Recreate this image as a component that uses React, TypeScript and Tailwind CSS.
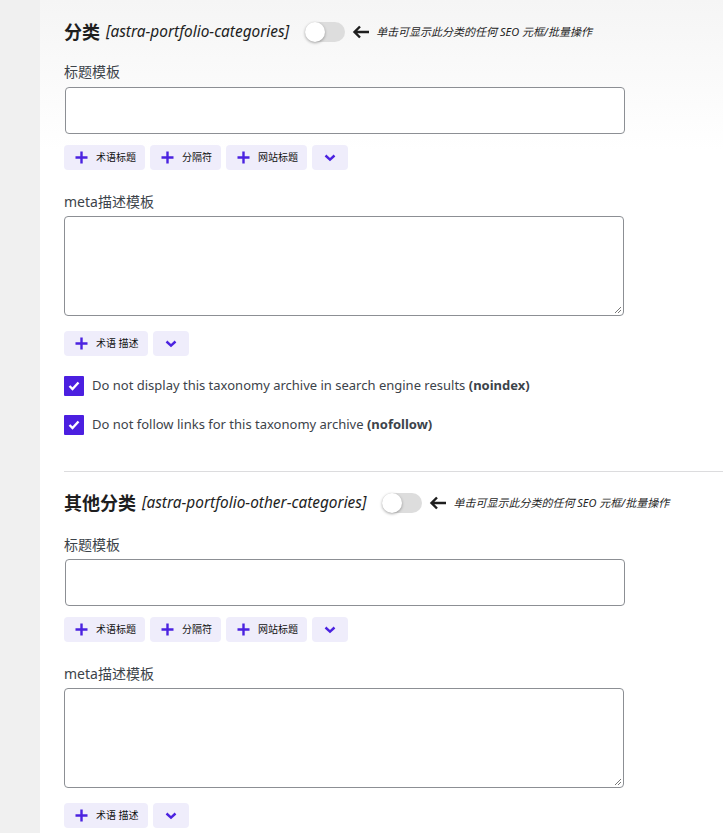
const cjk = '"Noto Sans", "Noto Sans CJK SC", sans-serif';

function Toggle() {
  return (
    <div className="relative w-[40px] h-[20px] rounded-full bg-[#dddddd]">
      <div className="absolute left-0 top-0 w-[20px] h-[20px] rounded-full bg-white shadow-[0_1px_3px_rgba(0,0,0,0.35)]" />
    </div>
  );
}

function Plus() {
  return (
    <svg width="13" height="13" viewBox="0 0 13 13" className="shrink-0">
      <path d="M6.5 0.5v12M0.5 6.5h12" stroke="#4b22e0" strokeWidth="2.4" />
    </svg>
  );
}

function Chevron() {
  return (
    <svg width="12" height="8" viewBox="0 0 12 8">
      <path d="M1.5 1.5l4.5 4.2 4.5-4.2" fill="none" stroke="#4b22e0" strokeWidth="2.4" />
    </svg>
  );
}

function TagButton({ label, w }: { label: string; w: string }) {
  return (
    <button
      className={`flex items-center gap-[8px] h-[25px] pl-[11px] rounded-[4px] bg-[#efedfb] text-[10px] text-[#111111] ${w}`}
    >
      <Plus />
      <span>{label}</span>
    </button>
  );
}

function MoreButton() {
  return (
    <button className="flex items-center justify-center w-[36px] h-[25px] rounded-[4px] bg-[#efedfb]">
      <Chevron />
    </button>
  );
}

function Checkbox({ text, bold }: { text: string; bold: string }) {
  return (
    <div className="flex items-center gap-[8px] h-[20px]">
      <div className="flex items-center justify-center w-[20px] h-[20px] bg-[#4b1fe0] rounded-[1px]">
        <svg width="12" height="10" viewBox="0 0 12 10">
          <path d="M1.5 5l3 3 6-6.5" fill="none" stroke="white" strokeWidth="2.4" />
        </svg>
      </div>
      <span className="text-[13px] text-[#3c434a]">
        {text} <b className="font-bold">{bold}</b>
      </span>
    </div>
  );
}

function Section({ title, slug, first }: { title: string; slug: string; first?: boolean }) {
  return (
    <section className={first ? "pt-[20px]" : "pt-[19px]"}>
      <div className="flex items-center h-[24px]">
        <h2 className="text-[18px] font-bold text-[#1e1e1e] leading-[24px]">{title}</h2>
        <span className="ml-[6px] text-[15.4px] italic text-[#1e1e1e]">[{slug}]</span>
        <div className="ml-[16px]">
          <Toggle />
        </div>
        <svg width="18" height="14" viewBox="0 0 18 14" className="ml-[7px]">
          <path d="M17 7H3M8 1.5L2.5 7 8 12.5" fill="none" stroke="#1e1e1e" strokeWidth="2.4" />
        </svg>
        <span className="ml-[6px] text-[11px] italic text-[#1e1e1e]">
          单击可显示此分类的任何 SEO 元框/批量操作
        </span>
      </div>

      <div className={`${first ? "mt-[18px]" : "mt-[20px]"} text-[14px] leading-[20px] text-[#3c434a]`}>标题模板</div>
      <div className={`${first ? "mt-[5px]" : "mt-[4px]"} ml-[1px] w-[560px] h-[47px] rounded-[4px] border border-[#8c8f94] bg-white`} />
      <div className="mt-[11px] flex gap-[5px]">
        <TagButton label="术语标题" w="w-[81px]" />
        <TagButton label="分隔符" w="w-[71px]" />
        <TagButton label="网站标题" w="w-[81px]" />
        <MoreButton />
      </div>

      <div className="mt-[22px] text-[14px] leading-[20px] text-[#3c434a]">meta描述模板</div>
      <div className="mt-[4px] relative w-[560px] h-[100px] rounded-[4px] border border-[#8c8f94] bg-white">
        <svg width="8" height="8" viewBox="0 0 8 8" className="absolute right-[1px] bottom-[1px]">
          <path d="M7 1L1 7M7 4L4 7" stroke="#777" strokeWidth="1" />
        </svg>
      </div>
      <div className="mt-[15px] flex gap-[5px]">
        <TagButton label="术语 描述" w="w-[84px]" />
        <MoreButton />
      </div>
    </section>
  );
}

export default function App() {
  return (
    <div className="flex min-h-screen" style={{ fontFamily: cjk }}>
      <aside className="w-[40px] shrink-0 bg-[#f0f0f0]" />
      <main className="flex-1 pl-[24px] pb-[40px] bg-[linear-gradient(to_bottom,#f5f5f5,#ffffff_150px)]">
        <Section title="分类" slug="astra-portfolio-categories" first />
        <div className="mt-[20px] flex flex-col gap-[19px]">
          <Checkbox text="Do not display this taxonomy archive in search engine results" bold="(noindex)" />
          <Checkbox text="Do not follow links for this taxonomy archive" bold="(nofollow)" />
        </div>
        <div className="mt-[36px] h-px bg-[#dcdcde]" />
        <Section title="其他分类" slug="astra-portfolio-other-categories" />
      </main>
    </div>
  );
}
